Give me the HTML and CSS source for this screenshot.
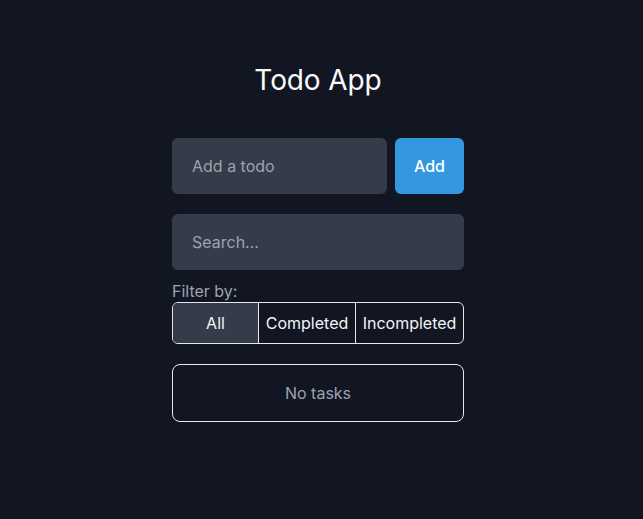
FILE: index.html
```html
<!DOCTYPE html>
<html>
<head>
<meta charset="utf-8">
<link rel="stylesheet" href="styles.css">
</head>
<body>
<div class="app">
  <h1 class="title">Todo App</h1>
  <div class="add-row">
    <input class="field add-input" type="text" placeholder="Add a todo">
    <button class="add-btn">Add</button>
  </div>
  <input class="field search" type="text" placeholder="Search...">
  <div class="filter-label">Filter by:</div>
  <div class="filters">
    <button class="filter active">All</button>
    <button class="filter">Completed</button>
    <button class="filter">Incompleted</button>
  </div>
  <div class="empty">No tasks</div>
</div>
</body>
</html>
```
FILE: styles.css
```css
* { box-sizing: border-box; }
html, body { margin: 0; padding: 0; }
body {
  background: #121623;
  color: #f3f4f6;
  font-family: Inter, "Noto Sans", sans-serif;
  height: 519px;
}
.app {
  width: 292px;
  margin-left: 172px;
  padding-top: 61px;
  display: flex;
  flex-direction: column;
}
.title {
  margin: 0;
  font-size: 28px;
  font-weight: 400;
  line-height: 38px;
  text-align: center;
  color: #f9fafb;
  letter-spacing: -0.1px;
}
.add-row {
  margin-top: 39px;
  display: flex;
  gap: 8px;
}
.field {
  height: 56px;
  border: none;
  outline: none;
  border-radius: 6px;
  background: #353b48;
  color: #f3f4f6;
  font-family: inherit;
  font-size: 16px;
  padding: 0 20px;
}
.field::placeholder { color: #9ca3af; }
.add-input { width: 215px; }
.add-btn {
  width: 69px;
  height: 56px;
  border: none;
  border-radius: 6px;
  background: #3498e0;
  color: #ffffff;
  font-family: inherit;
  font-size: 16px;
  font-weight: 500;
}
.search {
  margin-top: 20px;
  width: 292px;
}
.filter-label {
  margin-top: 11px;
  font-size: 16px;
  line-height: 20px;
  color: #9ca3af;
}
.filters {
  margin-top: 1px;
  display: flex;
  height: 42px;
  border: 1px solid #e5e7eb;
  border-radius: 6px;
  overflow: hidden;
}
.filter {
  border: none;
  background: transparent;
  color: #f3f4f6;
  font-family: inherit;
  font-size: 16px;
  font-weight: 400;
  padding: 0;
}
.filter + .filter { border-left: 1px solid #e5e7eb; }
.filter:nth-child(1) { width: 85px; }
.filter:nth-child(2) { width: 97px; }
.filter:nth-child(3) { flex: 1; }
.filter.active { background: #353b48; }
.empty {
  margin-top: 20px;
  height: 58px;
  border: 1px solid #e5e7eb;
  border-radius: 8px;
  display: flex;
  align-items: center;
  justify-content: center;
  color: #9ca3af;
  font-size: 16px;
}
```
